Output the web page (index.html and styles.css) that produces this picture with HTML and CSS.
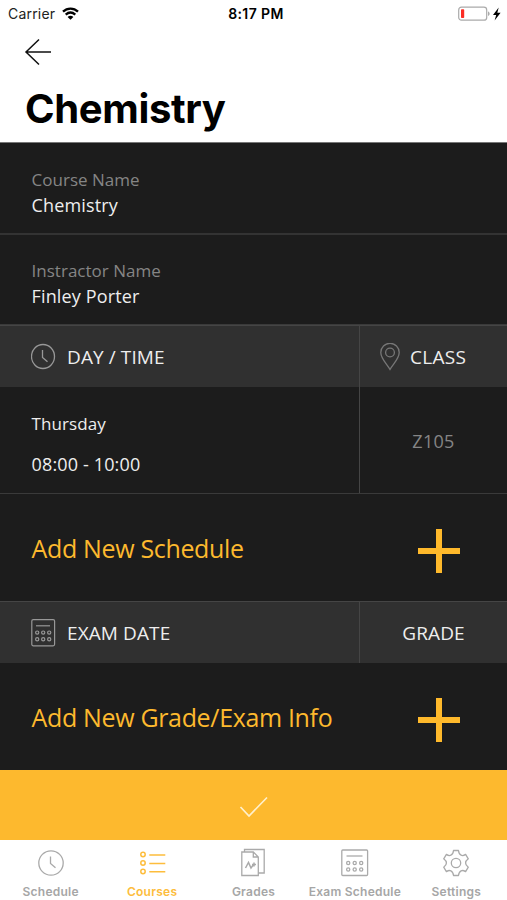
FILE: index.html
```html
<!DOCTYPE html>
<html lang="en">
<head>
<meta charset="utf-8">
<title>Chemistry</title>
<link rel="stylesheet" href="styles.css">
</head>
<body>
<header class="top">
  <div class="status">
    <div class="carrier"><span>Carrier</span>
      <svg class="wifi" width="17" height="13" viewBox="0 0 17 13"><g fill="none" stroke="#000" stroke-width="2.3"><path d="M1 4.6C5.3.5 11.700.5 16 4.600"/><path d="M3.700 7.600c2.900-2.500 6.700-2.500 9.600 0"/></g><path d="M5.600 9.900c1.800-1.400 4-1.400 5.800 0L8.500 12.700z"/></svg>
    </div>
    <div class="clock">8:17 PM</div>
    <div class="power">
      <svg width="44" height="16" viewBox="0 0 44 16"><rect x=".7" y="1.200" width="28" height="13" rx="2.800" fill="#fff" stroke="#aaa" stroke-width="1.200"/><rect x="3" y="3.300" width="3.200" height="8.800" rx=".8" fill="#fb2c24"/><path d="M30 5.500c2.200.7 2.200 3.700 0 4.400z" fill="#aaa"/><path d="M40.700 1.500 35 8.900h3.200L36.600 14.500l6-7.700h-3.300z"/></svg>
    </div>
  </div>
  <a class="back"><svg width="28" height="28" viewBox="0 0 28 28" fill="none" stroke="#111" stroke-width="1.500"><path d="M15 1.500 2 14l13 12.500M2 14h25"/></svg></a>
  <h1>Chemistry</h1>
</header>
<main>
  <section class="field"><div class="label">Course Name</div><div class="value">Chemistry</div></section>
  <section class="field second"><div class="label">Instractor Name</div><div class="value">Finley Porter</div></section>
  <section class="row head">
    <div class="left"><svg class="icon" width="26" height="28" viewBox="0 0 26 28" fill="none" stroke="#989898" stroke-width="1.300"><ellipse cx="12" cy="13.500" rx="11.500" ry="12"/><path d="M11.500 7v7.500l5 4.300"/></svg><span>DAY / TIME</span></div>
    <div class="right pinned"><svg class="pin" width="20" height="28" viewBox="0 0 20 28" fill="none" stroke="#777" stroke-width="1.300"><path d="M10 26.500C7 21 .8 15.800.8 9.500a9.200 9.200 0 0 1 18.400 0C19.200 15.800 13 21 10 26.500z"/><circle cx="10" cy="9.500" r="4.400"/></svg><span>CLASS</span></div>
  </section>
  <section class="row slot">
    <div class="left"><div class="weekday">Thursday</div><div class="hours">08:00 - 10:00</div></div>
    <div class="right"><span class="room">Z105</span></div>
  </section>
  <section class="add"><span>Add New Schedule</span><svg width="42" height="44" viewBox="0 0 42 44"><path d="M0 22h42M21 0v44" stroke="#ffb92b" stroke-width="6"/></svg></section>
  <section class="row head">
    <div class="left"><svg class="icon" width="26" height="28" viewBox="0 0 26 28" fill="none" stroke="#989898" stroke-width="1.200"><rect x=".8" y=".6" width="22.800" height="26.200" rx="1.500"/><path d="M5 6.800h14"/><circle cx="6.200" cy="13.600" r="1.600"/><circle cx="12.200" cy="13.600" r="1.600"/><circle cx="18.200" cy="13.600" r="1.600"/><circle cx="6.200" cy="20.300" r="1.600"/><circle cx="12.200" cy="20.300" r="1.600"/><circle cx="18.200" cy="20.300" r="1.600"/></svg><span>EXAM DATE</span></div>
    <div class="right"><span>GRADE</span></div>
  </section>
  <section class="add"><span>Add New Grade/Exam Info</span><svg width="42" height="44" viewBox="0 0 42 44"><path d="M0 22h42M21 0v44" stroke="#ffb92b" stroke-width="6"/></svg></section>
  <button class="confirm" aria-label="Save"><svg width="30" height="24" viewBox="0 0 30 24" fill="none" stroke="#fff0cc" stroke-width="1.700"><path d="m1.500 12 8.500 9L28 2.500"/></svg></button>
</main>
<nav>
  <a class="tab"><svg width="28" height="30" viewBox="0 0 28 30"><circle cx="14" cy="15" r="12.200"/><path d="M13.500 8.500v7l5 4.300"/></svg><span>Schedule</span></a>
  <a class="tab active"><svg width="28" height="30" viewBox="0 0 28 30"><g stroke-width="1.500"><circle cx="5" cy="6.500" r="2.200"/><circle cx="5" cy="15" r="2.200"/><circle cx="5" cy="23.500" r="2.200"/><path d="M11.300 7h16M11.300 15.500h16M11.300 23.700h16"/></g></svg><span>Courses</span></a>
  <a class="tab"><svg width="28" height="30" viewBox="0 0 28 30"><path d="M2.800 4h11.500l5 5v18.500H2.800zM14.300 4v5h5M5.500 4V1.500h19.700v23.500h-5.900"/><path d="m6.500 20 3-5.500 2.500 5.500 2.500-3.500M15 14.500v4M13 16.500h4" stroke-width="1.500"/></svg><span>Grades</span></a>
  <a class="tab"><svg width="28" height="30" viewBox="0 0 28 30"><rect x=".8" y="2" width="25.800" height="25.500" rx="1"/><path d="M5.500 8h16"/><circle cx="7.200" cy="15" r="1.600"/><circle cx="13.700" cy="15" r="1.600"/><circle cx="20.200" cy="15" r="1.600"/><circle cx="7.200" cy="21.500" r="1.600"/><circle cx="13.700" cy="21.500" r="1.600"/><circle cx="20.200" cy="21.500" r="1.600"/></svg><span>Exam Schedule</span></a>
  <a class="tab"><svg width="28" height="30" viewBox="0 0 28 30"><path d="M11.500 2.500h5q.4 3.900 2.600 4.700 1.900 1 4.500-.8l2.700 4.400q-3 2.200-2.700 4.200-.1 2.100 2.700 4.200l-2.700 4.400q-2.600-1.700-4.500-.8-2.200 1-2.600 4.700h-5q-.4-3.700-2.600-4.700-1.900-.9-4.500.8l-2.700-4.400Q4.500 17.100 4.400 15q.3-2-2.700-4.200l2.700-4.400q2.600 1.800 4.500.8 2.200-.8 2.600-4.700z" stroke-linejoin="round"/><circle cx="14" cy="15" r="4.700"/></svg><span>Settings</span></a>
</nav>
</body>
</html>
```
FILE: styles.css
```css
* { box-sizing: border-box; }
body { margin: 0; width: 507px; height: 900px; overflow: hidden; background: #fff; font-family: "Open Sans", sans-serif; color: #eee; }
svg { display: block; flex: none; }
span { white-space: nowrap; }
.top { height: 143px; color: #000; font-family: Inter, sans-serif; border-bottom: 1px solid #777; }
.status { height: 27px; display: grid; grid-template-columns: 1fr 1fr 1fr; padding: 0 5px 0 8px; align-items: center; font-size: 14px; }
.carrier { display: flex; gap: 7px; align-items: center; letter-spacing: .2px; color: #222; }
.clock { text-align: center; font-weight: 600; letter-spacing: .4px; padding-left: 2px; }
.power { display: flex; justify-content: flex-end; }
.back { display: block; padding: 11px 0 0 24px; }
h1 { margin: 17px 0 0 25px; font-size: 40px; line-height: 52px; font-weight: 700; letter-spacing: -.35px; }
main { background: #1c1c1c; height: 697px; }
.field { height: 92px; padding: 24px 0 0 31.5px; border-bottom: 2px solid #333; font-size: 18px; line-height: 25.5px; }
.field.second { height: 90px; padding-top: 23px; border-bottom: 1px solid #3a3a3a; }
.label { color: #858585; font-size: 17px; letter-spacing: .02px; }
.value { color: #eee; letter-spacing: .15px; }
.row { display: grid; grid-template-columns: 359px 148px; }
.right { border-left: 1px solid #454545; display: flex; align-items: center; justify-content: center; }
.head { height: 62px; background: #303030; border-top: 1px solid #454545; font-size: 19px; letter-spacing: .1px; }
.head .left { display: flex; align-items: center; padding-left: 31px; gap: 10px; }
.head .pinned { justify-content: flex-start; gap: 10px; padding-left: 20px; letter-spacing: .3px; }
.slot { height: 107px; border-bottom: 1px solid #3a3a3a; font-size: 18px; }
.slot .left { padding: 17px 0 0 31.5px; line-height: 40px; }
.weekday { font-size: 17px; letter-spacing: .08px; }
.hours { letter-spacing: .15px; }
.room { color: #858585; letter-spacing: .3px; padding-top: 1px; }
.add { height: 107px; display: flex; align-items: center; justify-content: space-between; padding: 6px 47px 0 31.5px; color: #fdb92e; font-size: 25px; letter-spacing: -.34px; }
.add span { margin-top: -5px; }
.confirm { width: 100%; height: 70px; display: flex; align-items: center; justify-content: center; padding: 4px 0 0; border: 0; background: #fdb92e; }
nav { height: 60px; display: grid; grid-template-columns: repeat(5, 1fr); padding: 8px 0 0; font-family: Inter, sans-serif; font-size: 12px; font-weight: 600; color: #a6a6a6; }
.tab { display: flex; flex-direction: column; align-items: center; min-width: 0; }
.tab svg { fill: none; stroke: #aaa; stroke-width: 1.3; }
.tab span { line-height: 16px; margin-top: 6px; letter-spacing: .25px; }
.active { color: #fdbd3c; }
.active svg { stroke: #fdbd3c; }
```
